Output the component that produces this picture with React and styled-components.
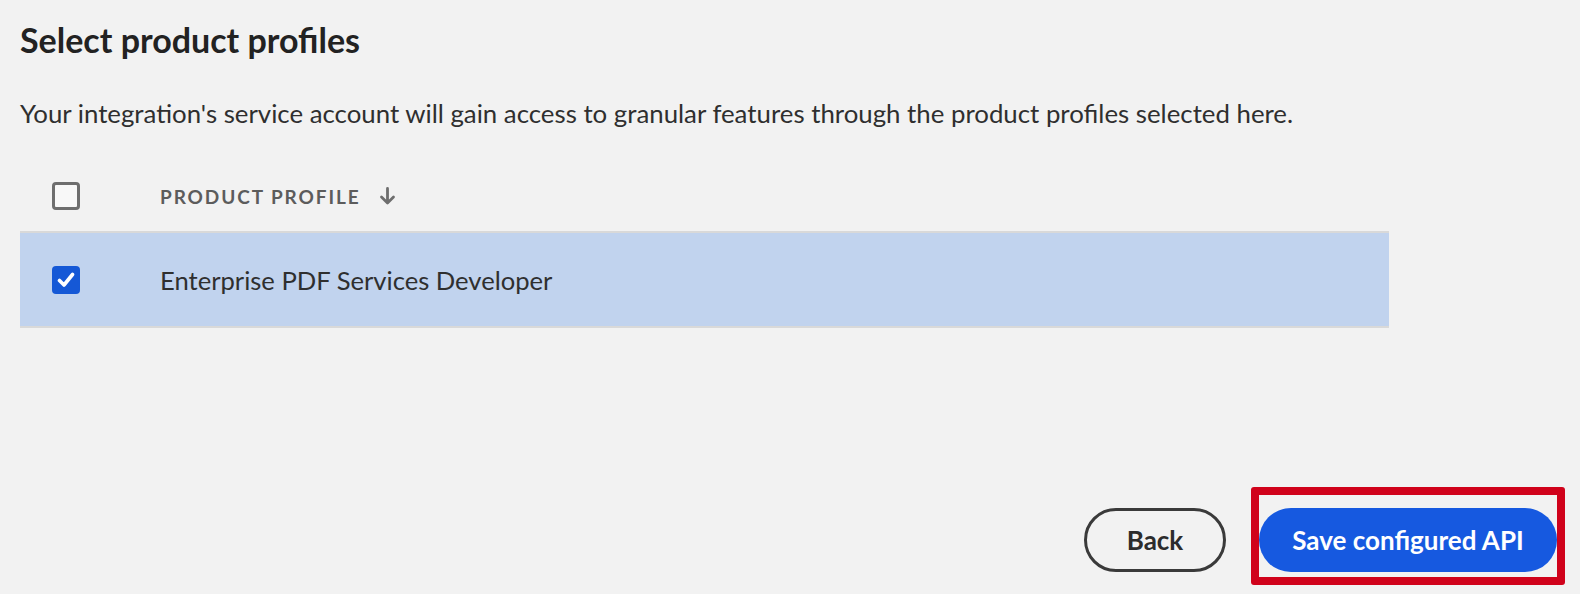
import React from "react";
import styled, { createGlobalStyle } from "styled-components";

const Global = createGlobalStyle`
  html, body { margin: 0; padding: 0; background: #f2f2f2; }
  body { font-family: Lato, "Noto Sans", sans-serif; color: #2c2c2c; }
`;

const Page = styled.div`
  height: 594px;
  box-sizing: border-box;
  display: flex;
  flex-direction: column;
  padding: 20px 15px 9px 20px;
`;

const Title = styled.h1`
  margin: 0;
  font-size: 34px;
  line-height: 40px;
  font-weight: 700;
  color: #222;
`;

const Description = styled.p`
  margin: 37px 0 0;
  font-size: 25.8px;
  line-height: 32px;
  color: #2f2f2f;
`;

const Table = styled.div`
  margin-top: 32px;
  width: 1369px;
  display: flex;
  flex-direction: column;
`;

const Row = styled.div`
  display: flex;
  align-items: center;
  height: ${(p) => (p.$head ? "70px" : "93px")};
  padding-left: 32px;
  background: ${(p) => (p.$selected ? "#c1d3ee" : "transparent")};
  border-top: ${(p) => (p.$head ? "none" : "2px solid #d9d9d9")};
  border-bottom: ${(p) => (p.$head ? "none" : "2px solid #d9d9d9")};
`;

const Box = styled.span`
  width: 28px;
  height: 28px;
  box-sizing: border-box;
  border-radius: 4px;
  display: inline-flex;
  align-items: center;
  justify-content: center;
  flex: none;
  border: ${(p) => (p.$checked ? "none" : "3px solid #6e6e6e")};
  background: ${(p) => (p.$checked ? "#1558d6" : "#f8f8f8")};
`;

const HeadLabel = styled.span`
  margin-left: 80px;
  font-size: 19px;
  font-weight: 700;
  letter-spacing: 1.9px;
  color: #5c5c5c;
  display: inline-flex;
  align-items: center;
  gap: 18px;
`;

const CellText = styled.span`
  margin-left: 80px;
  font-size: 25.6px;
  color: #2f2f2f;
`;

const Footer = styled.div`
  margin-top: auto;
  display: flex;
  justify-content: flex-end;
  align-items: flex-end;
  gap: 25px;
`;

const BackButton = styled.button`
  width: 142px;
  height: 64px;
  margin-bottom: 13px;
  border-radius: 32px;
  border: 3px solid #3a3a3a;
  background: transparent;
  font-family: inherit;
  font-size: 26px;
  font-weight: 700;
  color: #2c2c2c;
`;

const Highlight = styled.div`
  border: 8px solid #d0021b;
  border-radius: 3px;
  padding: 13px 0 5px;
  display: flex;
`;

const PrimaryButton = styled.button`
  width: 298px;
  height: 64px;
  border-radius: 32px;
  border: none;
  background: #1659e0;
  font-family: inherit;
  font-size: 26px;
  font-weight: 700;
  color: #fff;
`;

const Check = () => (
  <svg width="18" height="16" viewBox="0 0 18 16">
    <path d="M2.5 8.5 L7 13 L15.5 2.5" fill="none" stroke="#fff" strokeWidth="3.6" strokeLinecap="round" strokeLinejoin="round" />
  </svg>
);

const DownArrow = () => (
  <svg width="17" height="18" viewBox="0 0 17 18">
    <path d="M8.5 1.5 V15.5 M2.5 10 L8.5 16 L14.5 10" fill="none" stroke="#6e6e6e" strokeWidth="2.8" strokeLinecap="round" strokeLinejoin="round" />
  </svg>
);

export default function App() {
  return (
    <>
      <Global />
      <Page>
        <Title>Select product profiles</Title>
        <Description>
          Your integration's service account will gain access to granular features through the product profiles selected here.
        </Description>
        <Table>
          <Row $head>
            <Box />
            <HeadLabel>
              PRODUCT PROFILE
              <DownArrow />
            </HeadLabel>
          </Row>
          <Row $selected>
            <Box $checked>
              <Check />
            </Box>
            <CellText>Enterprise PDF Services Developer</CellText>
          </Row>
        </Table>
        <Footer>
          <BackButton>Back</BackButton>
          <Highlight>
            <PrimaryButton>Save configured API</PrimaryButton>
          </Highlight>
        </Footer>
      </Page>
    </>
  );
}
